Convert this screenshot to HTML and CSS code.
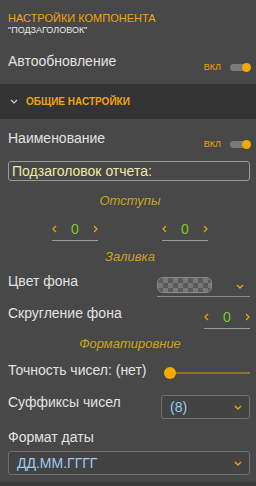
FILE: index.html
```html
<!DOCTYPE html>
<html lang="ru">
<head>
    <meta charset="UTF-8">
    <title>Настройки компонента</title>
    <link rel="stylesheet" href="styles.css">
</head>
<body>
    <div class="panel-head">
        <div class="panel-title">Настройки компонента</div>
        <div class="panel-sub">"Подзаголовок"</div>
    </div>

    <div class="content">
        <div class="row row-auto">
            <span class="label">Автообновление</span>
            <div class="switch">
                <span class="switch-text">вкл</span>
                <span class="switch-track"><span class="switch-knob"></span></span>
            </div>
        </div>
    </div>

    <div class="section-bar">
        <svg class="bar-chevron" viewBox="0 0 8 5" width="8" height="5">
            <polyline points="1,1 4,4 7,1" fill="none" stroke="#cfcfcf" stroke-width="1.2"/>
        </svg>
        <span>Общие настройки</span>
    </div>

    <div class="content">
        <div class="row row-name">
            <span class="label">Наименование</span>
            <div class="switch">
                <span class="switch-text">вкл</span>
                <span class="switch-track"><span class="switch-knob"></span></span>
            </div>
        </div>

        <div class="text-input">Подзаголовок отчета:</div>

        <div class="group-title group-indent">Отступы</div>
        <div class="steppers">
            <div class="stepper">
                <svg viewBox="0 0 5 8" width="5" height="8"><polyline points="4,1 1,4 4,7" fill="none" stroke="#f0a30a" stroke-width="1.2"/></svg>
                <span class="stepper-value">0</span>
                <svg viewBox="0 0 5 8" width="5" height="8"><polyline points="1,1 4,4 1,7" fill="none" stroke="#f0a30a" stroke-width="1.2"/></svg>
            </div>
            <div class="stepper">
                <svg viewBox="0 0 5 8" width="5" height="8"><polyline points="4,1 1,4 4,7" fill="none" stroke="#f0a30a" stroke-width="1.2"/></svg>
                <span class="stepper-value">0</span>
                <svg viewBox="0 0 5 8" width="5" height="8"><polyline points="1,1 4,4 1,7" fill="none" stroke="#f0a30a" stroke-width="1.2"/></svg>
            </div>
        </div>

        <div class="group-title group-fill">Заливка</div>
        <div class="row row-color">
            <span class="label">Цвет фона</span>
            <div class="color-pick">
                <span class="swatch"></span>
                <svg viewBox="0 0 8 5" width="8" height="5"><polyline points="1,1 4,4 7,1" fill="none" stroke="#f0a30a" stroke-width="1.4"/></svg>
            </div>
        </div>
        <div class="row row-radius">
            <span class="label">Скругление фона</span>
            <div class="stepper stepper-radius">
                <svg viewBox="0 0 5 8" width="5" height="8"><polyline points="4,1 1,4 4,7" fill="none" stroke="#f0a30a" stroke-width="1.2"/></svg>
                <span class="stepper-value">0</span>
                <svg viewBox="0 0 5 8" width="5" height="8"><polyline points="1,1 4,4 1,7" fill="none" stroke="#f0a30a" stroke-width="1.2"/></svg>
            </div>
        </div>

        <div class="group-title group-format">Форматировние</div>
        <div class="row row-precision">
            <span class="label">Точность чисел: (нет)</span>
            <div class="slider">
                <span class="slider-knob"></span>
                <span class="slider-line"></span>
            </div>
        </div>
        <div class="row row-suffix">
            <span class="label">Суффиксы чисел</span>
            <div class="select select-small">
                <span>(8)</span>
                <svg viewBox="0 0 8 5" width="8" height="5"><polyline points="1,1 4,4 7,1" fill="none" stroke="#f0a30a" stroke-width="1.4"/></svg>
            </div>
        </div>
        <div class="label label-date">Формат даты</div>
        <div class="select select-wide">
            <span>ДД.ММ.ГГГГ</span>
            <svg viewBox="0 0 8 5" width="8" height="5"><polyline points="1,1 4,4 7,1" fill="none" stroke="#f0a30a" stroke-width="1.4"/></svg>
        </div>
    </div>

    <div class="panel-foot"></div>
</body>
</html>
```

FILE: styles.css
```css
/* General */
* {
    box-sizing: border-box;
    margin: 0;
    padding: 0;
}

body {
    width: 256px;
    height: 486px;
    overflow: hidden;
    background-color: #484848;
    color: #e2e2e2;
    font-family: 'Liberation Sans', Arial, sans-serif;
}

/* Header */
.panel-head {
    padding: 12px 8px 0;
}

.panel-title {
    color: #f0a30a;
    font-size: 11px;
    line-height: 12px;
    text-transform: uppercase;
}

.panel-sub {
    color: #e8e8e8;
    font-size: 9px;
    line-height: 12px;
    text-transform: uppercase;
}

.content {
    padding: 0 6px 0 8px;
}

/* Rows */
.row {
    display: flex;
    justify-content: space-between;
    align-items: flex-start;
}

.label {
    font-size: 14px;
    line-height: 24px;
    color: #e2e2e2;
}

.row-auto {
    margin-top: 13px;
}

.row-name {
    margin-top: 7px;
}

/* Switch */
.switch {
    display: flex;
    align-items: center;
    gap: 9px;
    margin-top: 13px;
    height: 10px;
}

.switch-text {
    color: #f0a30a;
    font-size: 9px;
    text-transform: uppercase;
}

.switch-track {
    position: relative;
    width: 20px;
    height: 7px;
    border-radius: 4px;
    background-color: #7a7a7a;
}

.switch-knob {
    position: absolute;
    right: -1px;
    top: -1px;
    width: 9px;
    height: 9px;
    border-radius: 50%;
    background-color: #f5a800;
}

/* Section bar */
.section-bar {
    display: flex;
    align-items: center;
    height: 35px;
    margin-top: 11px;
    padding-left: 10px;
    background-color: #333333;
    color: #f0a30a;
    font-size: 10px;
    font-weight: bold;
    text-transform: uppercase;
}

.bar-chevron {
    margin-right: 8px;
}

/* Text input */
.text-input {
    margin-top: 11px;
    height: 20px;
    padding-left: 3px;
    border: 1px solid #9a9a9a;
    border-radius: 3px;
    color: #f2e9a6;
    font-size: 14px;
    line-height: 18px;
}

/* Group titles */
.group-title {
    text-align: center;
    color: #c9a51c;
    font-size: 13px;
    font-style: italic;
    line-height: 16px;
    padding-left: 2px;
}

.group-indent {
    margin-top: 12px;
}

.group-fill {
    margin-top: 8px;
}

.group-format {
    margin-top: 7px;
}

/* Steppers */
.steppers {
    display: flex;
    justify-content: center;
    gap: 64px;
    margin-top: 9px;
    padding-left: 2px;
}

.stepper {
    display: flex;
    align-items: center;
    justify-content: space-between;
    width: 46px;
    height: 23px;
    border-bottom: 1px solid #9a9a9a;
}

.stepper-value {
    color: #7cc82c;
    font-size: 14px;
    line-height: 22px;
}

.stepper-radius {
    margin-top: 5px;
}

/* Colour picker */
.row-color {
    margin-top: 4px;
}

.color-pick {
    display: flex;
    justify-content: space-between;
    align-items: flex-start;
    width: 93px;
    height: 20px;
    margin-top: 8px;
    padding-right: 6px;
    border-bottom: 1px solid #8a8a8a;
}

.color-pick svg {
    margin-top: 7px;
}

.swatch {
    width: 55px;
    height: 16px;
    border: 1px solid #8a8a8a;
    border-radius: 6px;
    background-color: #5a5a5a;
    background-image: conic-gradient(#777 25%, #5a5a5a 0 50%, #777 0 75%, #5a5a5a 0);
    background-size: 10px 10px;
}

.row-radius {
    margin-top: 4px;
}

/* Slider */
.row-precision {
    margin-top: 6px;
}

.slider {
    position: relative;
    width: 86px;
    height: 12px;
    margin-top: 9px;
}

.slider-line {
    position: absolute;
    left: 6px;
    right: 0;
    top: 5px;
    height: 2px;
    background-color: #8f7233;
}

.slider-knob {
    position: absolute;
    left: 0;
    top: 0;
    width: 12px;
    height: 12px;
    border-radius: 50%;
    background-color: #f5a800;
    z-index: 1;
}

/* Selects */
.row-suffix {
    margin-top: 8px;
}

.select {
    display: flex;
    justify-content: space-between;
    align-items: center;
    height: 24px;
    padding: 0 7px 0 8px;
    border: 1px solid #6e6e6e;
    border-radius: 3px;
    background-color: #434343;
    color: #9ccaf2;
    font-size: 14px;
}

.select-small {
    width: 89px;
    margin-top: 5px;
}

.label-date {
    display: block;
    margin-top: 6px;
}

.select-wide {
    margin-top: 2px;
}

.panel-foot {
    margin-top: 7px;
    height: 6px;
    background-color: #3b3b3b;
}
```
